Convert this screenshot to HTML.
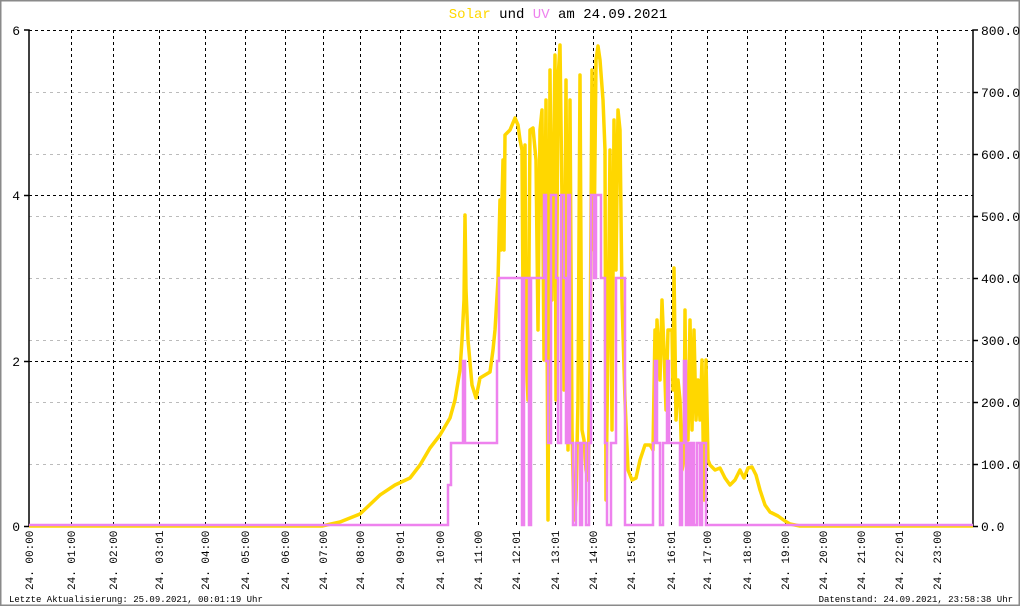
<!DOCTYPE html>
<html><head><meta charset="utf-8"><style>
html,body{margin:0;padding:0;background:#fff}
svg{display:block}
text{font-family:"Liberation Mono","DejaVu Sans Mono",monospace}
</style></head><body>
<svg width="1020" height="606" viewBox="0 0 1020 606" xmlns="http://www.w3.org/2000/svg">
<rect x="0.5" y="0.5" width="1019" height="605" fill="#fff" stroke="#8a8a8a" stroke-width="2"/>
<text x="558" y="18" font-size="14" text-anchor="middle"><tspan fill="#ffd700">Solar</tspan><tspan fill="#000"> und </tspan><tspan fill="#ee82ee">UV</tspan><tspan fill="#000"> am 24.09.2021</tspan></text>
<g stroke="#bbb" stroke-dasharray="3,4" stroke-width="1">
<line x1="29" y1="92.5" x2="973" y2="92.5"/><line x1="29" y1="154.5" x2="973" y2="154.5"/><line x1="29" y1="216.5" x2="973" y2="216.5"/><line x1="29" y1="278.5" x2="973" y2="278.5"/><line x1="29" y1="340.5" x2="973" y2="340.5"/><line x1="29" y1="402.5" x2="973" y2="402.5"/><line x1="29" y1="464.5" x2="973" y2="464.5"/>
</g>
<g stroke="#000" stroke-dasharray="3,3" stroke-width="1">
<line x1="29" y1="30.5" x2="973" y2="30.5"/><line x1="29" y1="195.5" x2="973" y2="195.5"/><line x1="29" y1="361.5" x2="973" y2="361.5"/>
<line x1="71.5" y1="30" x2="71.5" y2="526"/><line x1="113.5" y1="30" x2="113.5" y2="526"/><line x1="159.5" y1="30" x2="159.5" y2="526"/><line x1="205.5" y1="30" x2="205.5" y2="526"/><line x1="245.5" y1="30" x2="245.5" y2="526"/><line x1="285.5" y1="30" x2="285.5" y2="526"/><line x1="323.5" y1="30" x2="323.5" y2="526"/><line x1="360.5" y1="30" x2="360.5" y2="526"/><line x1="400.5" y1="30" x2="400.5" y2="526"/><line x1="440.5" y1="30" x2="440.5" y2="526"/><line x1="478.5" y1="30" x2="478.5" y2="526"/><line x1="516.5" y1="30" x2="516.5" y2="526"/><line x1="555.5" y1="30" x2="555.5" y2="526"/><line x1="593.5" y1="30" x2="593.5" y2="526"/><line x1="631.5" y1="30" x2="631.5" y2="526"/><line x1="671.5" y1="30" x2="671.5" y2="526"/><line x1="707.5" y1="30" x2="707.5" y2="526"/><line x1="747.5" y1="30" x2="747.5" y2="526"/><line x1="785.5" y1="30" x2="785.5" y2="526"/><line x1="823.5" y1="30" x2="823.5" y2="526"/><line x1="861.5" y1="30" x2="861.5" y2="526"/><line x1="899.5" y1="30" x2="899.5" y2="526"/><line x1="937.5" y1="30" x2="937.5" y2="526"/>
</g>
<g stroke="#000" stroke-width="1.5" fill="none">
<polyline points="24,30 29,30 29,526.5 24,526.5"/>
<line x1="24" y1="195.5" x2="29" y2="195.5"/><line x1="24" y1="361.5" x2="29" y2="361.5"/>
<polyline points="978,30 973,30 973,526.5 978,526.5"/>
<line x1="973" y1="92.5" x2="978" y2="92.5"/><line x1="973" y1="154.5" x2="978" y2="154.5"/><line x1="973" y1="216.5" x2="978" y2="216.5"/><line x1="973" y1="278.5" x2="978" y2="278.5"/><line x1="973" y1="340.5" x2="978" y2="340.5"/><line x1="973" y1="402.5" x2="978" y2="402.5"/><line x1="973" y1="464.5" x2="978" y2="464.5"/>
</g>
<g font-size="13" fill="#000" text-anchor="end">
<text x="20" y="35">6</text><text x="20" y="200">4</text><text x="20" y="366">2</text><text x="20" y="531">0</text>
</g>
<g font-size="13" fill="#000">
<text x="981" y="35">800.0</text><text x="981" y="97">700.0</text><text x="981" y="159">600.0</text><text x="981" y="221">500.0</text><text x="981" y="283">400.0</text><text x="981" y="345">300.0</text><text x="981" y="407">200.0</text><text x="981" y="469">100.0</text><text x="981" y="531">0.0</text>
</g>
<polyline fill="none" stroke="#ffd700" stroke-width="3.5" stroke-linejoin="round" points="29,526 322,526 340,522 360,514 380,495 395,485 410,478 420,465 430,448 440,435 450,418 455,400 460,370 462,340 464,300 465,215 466,290 468,340 472,385 476,398 480,378 490,372 493,350 495,330 498,280 500,200 501,250 502,200 503,160 504,250 505,135 510,130 515,118 518,125 520,140 522,150 523,300 525,145 526,350 528,400 530,130 533,128 536,160 538,330 540,130 542,110 544,360 546,100 548,520 550,70 552,300 555,55 556,400 558,80 560,45 562,200 564,390 566,80 568,450 570,100 572,430 574,520 576,500 578,400 580,75 582,430 584,440 586,470 588,480 590,370 592,70 594,250 596,60 598,46 600,60 603,100 605,150 606,500 608,340 610,150 612,430 614,120 616,270 618,110 620,130 622,300 625,400 628,470 632,480 636,478 640,460 645,445 650,445 653,450 655,330 656,400 657,320 660,380 662,300 664,350 666,410 668,330 670,330 672,330 673,390 674,268 676,420 678,380 680,400 682,470 684,460 685,310 686,420 688,440 690,320 692,430 694,330 696,420 698,380 700,420 702,360 704,500 706,360 708,460 710,465 715,470 720,468 725,478 730,485 735,480 740,470 744,478 748,468 752,467 756,475 760,490 765,505 770,512 778,516 785,521 790,524 800,526 973,526"/>
<polyline fill="none" stroke="#ee82ee" stroke-width="2.5" points="29,525 448,525 448,485 451,485 451,443 463,443 463,361 465,361 465,443 497,443 497,361 499,361 499,278 522,278 522,525 524,525 524,278 529,278 529,525 531,525 531,278 544,278 544,195 546,195 546,361 548,361 548,443 551,443 551,195 556,195 556,278 558,278 558,443 561,443 561,195 564,195 564,278 566,278 566,443 568,443 568,195 570,195 570,443 573,443 573,525 576,525 576,443 580,443 580,525 582,525 582,443 586,443 586,525 589,525 589,443 591,443 591,195 594,195 594,278 596,278 596,195 601,195 601,278 605,278 605,443 607,443 607,525 611,525 611,443 616,443 616,278 625,278 625,525 653,525 653,443 655,443 655,361 657,361 657,443 660,443 660,525 663,525 663,443 667,443 667,361 669,361 669,443 680,443 680,525 682,525 682,443 684,443 684,361 686,361 686,525 688,525 688,443 690,443 690,525 692,525 692,443 694,443 694,525 697,525 697,443 700,443 700,525 702,525 702,443 706,443 706,525 973,525"/>
<g font-size="11" fill="#000">
<text transform="translate(33,590) rotate(-90)">24. 00:00</text>
<text transform="translate(75,590) rotate(-90)">24. 01:00</text>
<text transform="translate(117,590) rotate(-90)">24. 02:00</text>
<text transform="translate(163,590) rotate(-90)">24. 03:01</text>
<text transform="translate(209,590) rotate(-90)">24. 04:00</text>
<text transform="translate(249,590) rotate(-90)">24. 05:00</text>
<text transform="translate(289,590) rotate(-90)">24. 06:00</text>
<text transform="translate(327,590) rotate(-90)">24. 07:00</text>
<text transform="translate(364,590) rotate(-90)">24. 08:00</text>
<text transform="translate(404,590) rotate(-90)">24. 09:01</text>
<text transform="translate(444,590) rotate(-90)">24. 10:00</text>
<text transform="translate(482,590) rotate(-90)">24. 11:00</text>
<text transform="translate(520,590) rotate(-90)">24. 12:01</text>
<text transform="translate(559,590) rotate(-90)">24. 13:01</text>
<text transform="translate(597,590) rotate(-90)">24. 14:00</text>
<text transform="translate(635,590) rotate(-90)">24. 15:01</text>
<text transform="translate(675,590) rotate(-90)">24. 16:01</text>
<text transform="translate(711,590) rotate(-90)">24. 17:00</text>
<text transform="translate(751,590) rotate(-90)">24. 18:00</text>
<text transform="translate(789,590) rotate(-90)">24. 19:00</text>
<text transform="translate(827,590) rotate(-90)">24. 20:00</text>
<text transform="translate(865,590) rotate(-90)">24. 21:00</text>
<text transform="translate(903,590) rotate(-90)">24. 22:01</text>
<text transform="translate(941,590) rotate(-90)">24. 23:00</text>
</g>
<text x="9" y="602" font-size="9" fill="#000">Letzte Aktualisierung: 25.09.2021, 00:01:19 Uhr</text>
<text x="1013" y="602" font-size="9" fill="#000" text-anchor="end">Datenstand: 24.09.2021, 23:58:38 Uhr</text>
</svg>
</body></html>
